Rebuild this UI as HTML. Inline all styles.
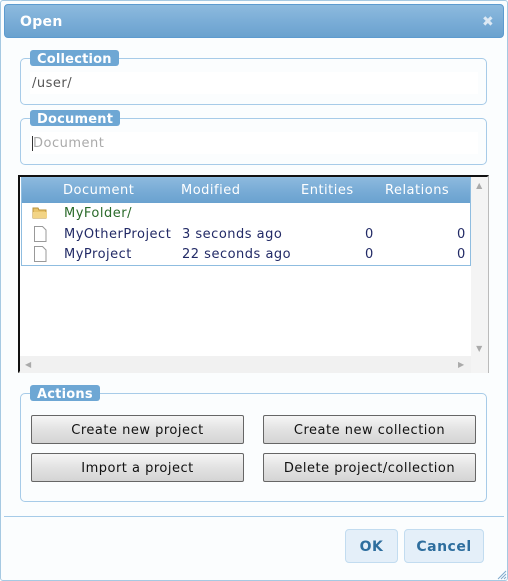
<!DOCTYPE html>
<html><head><meta charset="utf-8"><style>
*{box-sizing:border-box;margin:0;padding:0}
body{width:508px;height:581px;overflow:hidden;background:#fff;font-family:"DejaVu Sans","Liberation Sans",sans-serif;font-size:13px;letter-spacing:0.5px;position:relative}
.outer{position:absolute;left:0;top:0;width:508px;height:581px;border:1px solid #a6c9e2;background:#fbfdfe;border-radius:3px}
.title{position:absolute;left:4px;top:4px;width:500px;height:34px;border-radius:4px;border:1px solid #5d9bcf;background:linear-gradient(#8dbade,#79acd6 55%,#6aa2cf);color:#fff;font-weight:bold;font-size:14px;line-height:35px;padding-left:15px;letter-spacing:0.3px}
.title .x{position:absolute;right:9px;top:0;font-size:14px;color:#dde9f4}
.fs{position:absolute;left:20px;width:467px;border:1px solid #a7cbe8;border-radius:5px}
.lg{position:absolute;height:16px;background:#6ea7d4;border-radius:3px;color:#fff;font-weight:bold;font-size:13px;line-height:19px;padding:0 7px;letter-spacing:0.2px}
.inp{position:absolute;left:30px;width:448px;height:22px;background:#fff;line-height:24px;padding-left:2px;color:#555}
.tbl{position:absolute;left:18px;top:175px;width:471px;height:198px;border:2px solid #111;border-right-color:#bbb;border-bottom-color:#bbb;background:#fff}
.hdr{position:absolute;left:1px;top:0;width:450px;height:26px;background:linear-gradient(#8dbade,#76aad5 60%,#6aa2cf);color:#fff;line-height:28px}
.hdr span,.row span{position:absolute}
.rows{position:absolute;left:1px;top:0;width:450px;height:89px;border:1px solid #8fbde0}
.row{position:absolute;left:0;width:450px;height:20px;line-height:22px;color:#222a66}
.vs{position:absolute;left:451px;top:0;width:17px;height:179px;background:#f4f4f4;color:#aaa;font-size:8px;text-align:center}
.hs{position:absolute;left:0;top:179px;width:451px;height:17px;background:#f1f1f1;color:#aaa;font-size:8px}
.corner{position:absolute;left:451px;top:179px;width:17px;height:17px;background:#f4f4f4}
.btn{position:absolute;width:213px;height:29px;border:1px solid #666;border-radius:2px;background:linear-gradient(#f6f6f6,#e4e4e4 45%,#d4d4d4);text-align:center;line-height:29px;color:#111}
.b2{position:absolute;top:529px;height:34px;border:1px solid #c2dcf0;border-radius:4px;background:#e4eff9;color:#2e6e9e;font-weight:bold;text-align:center;line-height:34px;font-size:14px}
</style></head><body>
<div class="outer"></div>
<div class="title">Open<span class="x">✖</span></div>

<div class="fs" style="top:58px;height:47px"></div>
<div class="lg" style="left:30px;top:50px">Collection</div>
<div class="inp" style="top:72px">/user/</div>

<div class="fs" style="top:118px;height:47px"></div>
<div class="lg" style="left:30px;top:110px">Document</div>
<div class="inp" style="top:132px;color:#aaa"><span style="border-left:1px solid #333">Document</span></div>

<div class="tbl">
 <div class="hdr"><span style="left:42px">Document</span><span style="left:160px">Modified</span><span style="left:280px">Entities</span><span style="left:364px">Relations</span></div>
 <div class="rows">
  <div class="row" style="top:25px;color:#2a6a2a"><svg style="position:absolute;left:10px;top:3px" width="16" height="13"><path d="M1 2h5l1 2h7v8H1z" fill="#e9c46a" stroke="#b8913a"/><path d="M1 6h14v6H1z" fill="#f2d486"/></svg><span style="left:42px">MyFolder/</span></div>
  <div class="row" style="top:46px"><svg style="position:absolute;left:12px;top:2px" width="13" height="16"><path d="M0.5 0.5h8l3.5 3.5v11.5h-11.5z" fill="#fff" stroke="#999"/></svg><span style="left:42px">MyOtherProject</span><span style="left:160px">3 seconds ago</span><span style="left:343px">0</span><span style="left:435px">0</span></div>
  <div class="row" style="top:66px"><svg style="position:absolute;left:12px;top:2px" width="13" height="16"><path d="M0.5 0.5h8l3.5 3.5v11.5h-11.5z" fill="#fff" stroke="#999"/></svg><span style="left:42px">MyProject</span><span style="left:160px">22 seconds ago</span><span style="left:343px">0</span><span style="left:435px">0</span></div>
 </div>
 <div class="vs"><div style="padding-top:4px">▲</div><div style="position:absolute;bottom:3px;width:17px">▼</div></div>
 <div class="hs"><span style="position:absolute;left:5px;top:4px">◀</span><span style="position:absolute;left:438px;top:4px">▶</span></div>
 <div class="corner"></div>
</div>

<div class="fs" style="top:393px;height:109px"></div>
<div class="lg" style="left:30px;top:385px">Actions</div>
<div class="btn" style="left:31px;top:415px">Create new project</div>
<div class="btn" style="left:263px;top:415px">Create new collection</div>
<div class="btn" style="left:31px;top:453px">Import a project</div>
<div class="btn" style="left:263px;top:453px">Delete project/collection</div>

<div style="position:absolute;left:4px;top:516px;width:500px;height:1px;background:#a6cbe8"></div>
<div class="b2" style="left:345px;width:53px">OK</div>
<div class="b2" style="left:404px;width:80px">Cancel</div>
<svg style="position:absolute;right:1px;bottom:1px" width="10" height="10"><path d="M9 1L1 9M9 4L4 9M9 7L7 9" stroke="#7fa9cc"/></svg>
</body></html>
